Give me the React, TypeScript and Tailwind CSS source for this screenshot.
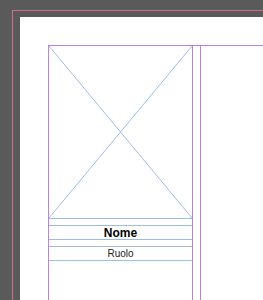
import React from "react";

const Guide = ({ className }: { className: string }) => (
  <div className={"absolute bg-[#c27ddf] pointer-events-none " + className} />
);

export default function App() {
  return (
    <div
      className="w-[263px] h-[300px] overflow-hidden bg-[#5a5a5a] pt-[10px] pl-[12px]"
      style={{ fontFamily: '"Liberation Sans", Arial, sans-serif' }}
    >
      <div className="w-[400px] h-[400px] border-t border-l border-[#c86f93] pt-[6px] pl-[7px]">
        <div className="relative w-[400px] h-[400px] bg-white pl-[28px] pt-[28px]">
          <div className="flex flex-row">
            <div className="w-[145px] flex flex-col">
              <div className="h-[174px] border border-[#9dbde9] relative">
                <svg className="absolute inset-0 w-full h-full" preserveAspectRatio="none" viewBox="0 0 100 100">
                  <line x1="0" y1="0" x2="100" y2="100" stroke="#9dbde9" strokeWidth="1" vectorEffect="non-scaling-stroke" />
                  <line x1="100" y1="0" x2="0" y2="100" stroke="#9dbde9" strokeWidth="1" vectorEffect="non-scaling-stroke" />
                </svg>
              </div>
              <div className="mt-[6px] h-[15px] border-y border-[#9dbde9] flex items-center justify-center text-[12px] font-bold text-black leading-none">
                Nome
              </div>
              <div className="mt-[6px] h-[15px] border-y border-[#9dbde9] flex items-center justify-center text-[10px] text-[#222] leading-none">
                Ruolo
              </div>
            </div>
          </div>
          {/* guides overlay */}
          <Guide className="left-[28px] top-[28px] w-[400px] h-[1px]" />
          <Guide className="left-[28px] top-[28px] w-[1px] h-[400px]" />
          <Guide className="left-[172px] top-[28px] w-[1px] h-[400px] bg-[#b27be0]" />
          <Guide className="left-[180px] top-[28px] w-[1px] h-[400px] bg-[#b27be0]" />
        </div>
      </div>
    </div>
  );
}
